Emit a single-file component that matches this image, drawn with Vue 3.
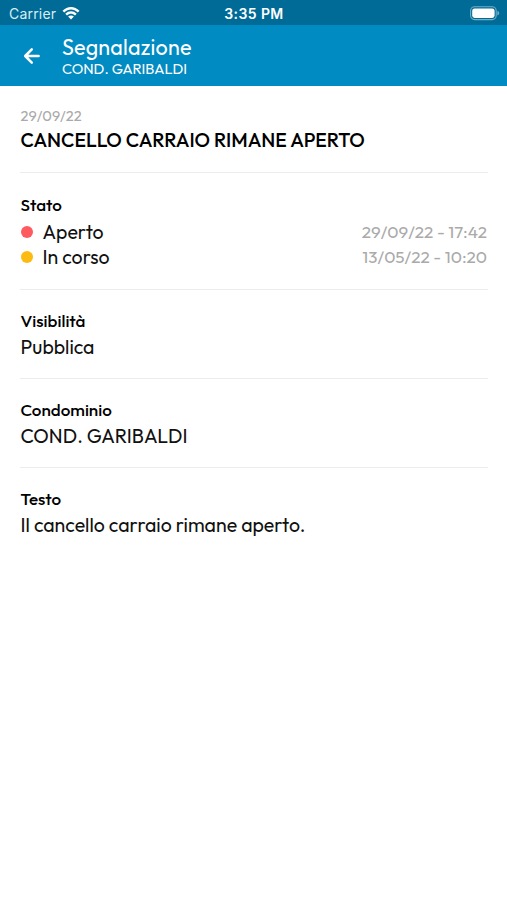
<template>
  <div class="page">
    <!-- Status bar -->
    <div class="status-bar">
      <div class="carrier">
        <span>Carrier</span>
        <svg class="wifi-icon" viewBox="0 0 18 14">
          <path d="M0.5 4.8C5.3-.3 12.7-.3 17.5 4.8L15.8 6.6C11.8 2.6 6.2 2.6 2.2 6.6Z" />
          <path d="M3.3 7.8C6.5 4.5 11.5 4.5 14.7 7.8L13 9.5C10.6 7.2 7.4 7.2 5 9.5Z" />
          <path d="M6.1 10.6C7.7 9 10.3 9 11.9 10.6L9 13.5Z" />
        </svg>
      </div>
      <span class="clock">3:35 PM</span>
      <div class="battery">
        <svg class="battery-icon" viewBox="0 0 30 15">
          <rect class="battery-shell" x="0.6" y="0.8" width="25.6" height="12.8" rx="4" />
          <rect x="2.2" y="2.4" width="22.4" height="9.6" rx="2.4" />
          <path class="battery-cap" d="M27.4 5C29.8 5.6 29.8 8.8 27.4 9.4Z" />
        </svg>
      </div>
    </div>

    <!-- Header -->
    <header class="header">
      <button class="back-btn">
        <svg class="back-icon" viewBox="0 0 18 18">
          <path d="M8.8 2.4L2.2 9l6.6 6.6M2.4 9h13.2" />
        </svg>
      </button>
      <div class="header-text">
        <h1 class="header-title">Segnalazione</h1>
        <p class="header-subtitle">{{ report.building }}</p>
      </div>
    </header>

    <!-- Content -->
    <main class="content">
      <section class="section intro">
        <p class="date">{{ report.date }}</p>
        <h2 class="title">{{ report.title }}</h2>
      </section>

      <section class="section state">
        <h3 class="label">Stato</h3>
        <div class="state-row" v-for="item in report.states" :key="item.name">
          <span class="dot" :class="item.color"></span>
          <span class="state-name">{{ item.name }}</span>
          <span class="state-time">{{ item.time }}</span>
        </div>
      </section>

      <section class="section" v-for="field in report.fields" :key="field.label">
        <h3 class="label">{{ field.label }}</h3>
        <p class="value">{{ field.value }}</p>
      </section>
    </main>
  </div>
</template>

<script setup>
import { ref } from 'vue';

const report = ref({
  date: '29/09/22',
  title: 'CANCELLO CARRAIO RIMANE APERTO',
  building: 'COND. GARIBALDI',
  states: [
    { name: 'Aperto', time: '29/09/22 - 17:42', color: 'red' },
    { name: 'In corso', time: '13/05/22 - 10:20', color: 'yellow' }
  ],
  fields: [
    { label: 'Visibilità', value: 'Pubblica' },
    { label: 'Condominio', value: 'COND. GARIBALDI' },
    { label: 'Testo', value: 'Il cancello carraio rimane aperto.' }
  ]
});
</script>

<style>
body {
  background-color: #fff;
}
</style>

<style scoped>
.page {
  min-height: 100vh;
  background-color: #fff;
  color: #111;
  font-family: Outfit, Lato, sans-serif;
  white-space: nowrap;
}
h1,
h2,
h3,
p {
  margin: 0;
}

/* Status bar */
.status-bar {
  height: 25px;
  box-sizing: border-box;
  padding: 2px 7px 0 9px;
  display: grid;
  grid-template-columns: 1fr auto 1fr;
  align-items: center;
  background-color: #006b96;
  color: #fff;
  font-family: Inter, sans-serif;
  font-size: 14px;
}
.carrier {
  display: flex;
  align-items: center;
  gap: 6px;
  color: #d9edf5;
  letter-spacing: 0.2px;
}
.wifi-icon {
  width: 18px;
  height: 14px;
  margin-top: -2px;
  fill: #fff;
}
.clock {
  margin-right: 1px;
  font-size: 14px;
  font-weight: 600;
  letter-spacing: 0.4px;
}
.battery {
  display: flex;
  justify-content: flex-end;
}
.battery-icon {
  width: 30px;
  height: 15px;
  fill: #fff;
}
.battery-shell {
  fill: none;
  stroke: #73aec6;
  stroke-width: 1.1;
}
.battery-cap {
  fill: #73aec6;
}

/* Header */
.header {
  height: 61px;
  box-sizing: border-box;
  padding-top: 1px;
  display: flex;
  align-items: center;
  background-color: #008bc3;
  color: #fff;
}
.back-btn {
  width: 62px;
  padding: 0 0 0 23px;
  border: none;
  background: none;
  display: flex;
  cursor: pointer;
}
.back-icon {
  width: 18px;
  height: 18px;
  fill: none;
  stroke: #fff;
  stroke-width: 2.5;
  stroke-linecap: round;
  stroke-linejoin: round;
}
.header-title {
  font-size: 21.5px;
  font-weight: 400;
  line-height: 24px;
  letter-spacing: 0.2px;
}
.header-subtitle {
  padding-top: 1px;
  margin-bottom: -1px;
  font-size: 14.6px;
  line-height: 18px;
}

/* Content */
.content {
  padding: 0 19px 0 20px;
}
.section {
  padding: 19px 0 18px 0.5px;
  border-bottom: 1px solid #ececec;
}
.section:last-child {
  border-bottom: none;
}
.intro {
  padding-top: 20px;
  padding-bottom: 19px;
}
.date {
  font-size: 14.6px;
  line-height: 20px;
  color: #aaa;
}
.title {
  font-size: 19.55px;
  font-weight: 500;
  line-height: 27px;
  color: #000;
}
.label {
  font-size: 17px;
  font-weight: 500;
  line-height: 24px;
  color: #000;
}
.value {
  padding-top: 1px;
  font-size: 19.5px;
  line-height: 26px;
}

/* State rows */
.state {
  padding-top: 20px;
  padding-bottom: 20px;
}
.state .label {
  margin-bottom: 2px;
}
.state-row {
  height: 25px;
  display: flex;
  align-items: center;
}
.dot {
  width: 12px;
  height: 12px;
  margin-right: 10px;
  border-radius: 50%;
}
.dot.red {
  background-color: #ff5a5f;
}
.dot.yellow {
  background-color: #fdbb12;
}
.state-name {
  font-size: 19.5px;
}
.state-time {
  margin-left: auto;
  padding-right: 1px;
  font-size: 17.1px;
  color: #aaa;
}
</style>
